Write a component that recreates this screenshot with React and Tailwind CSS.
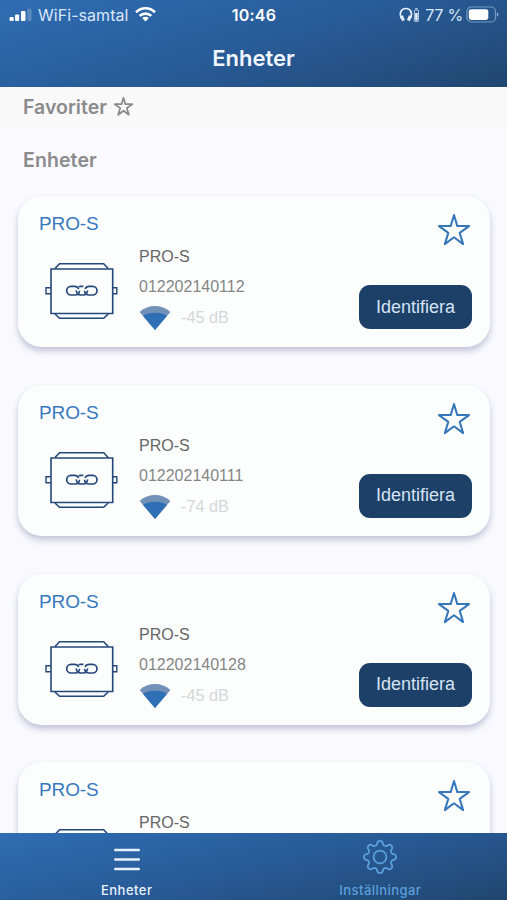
const DEVICES = [
  { id: 1, name: "PRO-S", serial: "012202140112", signal: "-45 dB" },
  { id: 2, name: "PRO-S", serial: "012202140111", signal: "-74 dB" },
  { id: 3, name: "PRO-S", serial: "012202140128", signal: "-45 dB" },
  { id: 4, name: "PRO-S" },
];

export default function App() {
  return (
    <div className="h-[900px] w-[507px] overflow-hidden flex flex-col bg-[#f9f9fe] font-['Inter',sans-serif]">
      <Header />
      <main className="flex-1 min-h-0 overflow-hidden">
        <div className="h-[39px] pl-[23px] flex items-center gap-[6px] bg-[#f9f9fa] text-[#8b8b8e]">
          <h2 className="text-[19.5px] leading-6 font-semibold">Favoriter</h2>
          <StarIcon className="size-[21px]" strokeWidth={2} />
        </div>
        <h2 className="mt-[22px] pl-[23px] text-[19.5px] leading-6 font-semibold tracking-[0.1px] text-[#8b8b8e]">Enheter</h2>
        <div className="mt-[24px] pl-[18px] pr-[17px] flex flex-col gap-[37.8px]">
          {DEVICES.map((d) => (
            <DeviceCard key={d.id} device={d} />
          ))}
        </div>
      </main>
      <TabBar />
    </div>
  );
}

function Header() {
  return (
    <header className="h-[87px] shrink-0 bg-[linear-gradient(163deg,#2f6db3_0%,#285b97_52%,#20466f_100%)] text-[#f0f6ff]">
      <div className="h-[30px] grid grid-cols-[1fr_auto_1fr] items-center pl-[9px] pr-[8px] text-[16px] leading-5">
        <div className="flex items-center">
          <SignalBars />
          <span className="ml-[6px] text-[16px] tracking-[0.05px] text-[#d8e7fa]">WiFi-samtal</span>
          <WifiIcon />
        </div>
        <span className="font-semibold tracking-[0.2px] text-white">10:46</span>
        <div className="flex items-center justify-end">
          <HeadphonesIcon />
          <span className="ml-[5px] whitespace-nowrap tracking-[-0.2px] text-[#d8e7fa]">77 %</span>
          <BatteryIcon />
        </div>
      </div>
      <h1 className="mt-[14px] text-center text-[22px] leading-7 font-semibold">Enheter</h1>
    </header>
  );
}

function DeviceCard({ device }) {
  return (
    <article className="h-[151px] shrink-0 rounded-[24px] bg-[#fcfefe] pl-[21px] pr-[18px] flex justify-between font-['Liberation_Sans',sans-serif] shadow-[0_4px_6px_rgba(90,95,145,0.34)]">
      <div>
        <h3 className="pt-[17px] text-[19px] leading-[22px] tracking-[-0.1px] text-[#3778bd]">{device.name}</h3>
        <div className="mt-[12px] flex">
          <DeviceIcon />
          <div className="ml-[21px] text-[16px] leading-5">
            <div className="text-[#666]">{device.name}</div>
            {device.serial && <div className="mt-[10px] text-[#858585]">{device.serial}</div>}
            {device.signal && (
              <div className="mt-[8px] flex items-center text-[#d6d7d9]">
                <SignalFan />
                <span className="ml-[9px] -mt-[1px] text-[16.3px]">{device.signal}</span>
              </div>
            )}
          </div>
        </div>
      </div>
      <div className="flex flex-col items-end">
        <StarIcon className="mt-[16px] size-9 text-[#3577b9]" strokeWidth={1.35} />
        {device.serial && (
          <button className="mt-[37px] h-[44px] w-[113px] rounded-[11px] bg-[#1d4069] text-[18px] text-[#d5e3f3]">
            Identifiera
          </button>
        )}
      </div>
    </article>
  );
}

function TabBar() {
  return (
    <nav className="h-[67px] shrink-0 grid grid-cols-2 bg-[linear-gradient(168deg,#2f6db3_0%,#285b97_50%,#20466f_100%)] text-[13px] leading-4 font-medium">
      <div className="flex flex-col items-center text-[#e8f1fd]">
        <svg className="mt-[14px]" width="28" height="24" viewBox="0 0 28 24" fill="none" stroke="currentColor" strokeWidth="2.4" strokeLinecap="round">
          <path d="M2.2 3h23.6M2.2 12.5h23.6M2.2 22h23.6" />
        </svg>
        <span className="mt-[11px] tracking-[0.5px]">Enheter</span>
      </div>
      <div className="flex flex-col items-center text-[#5b9fdc]">
        <GearIcon />
        <span className="mt-[8px] tracking-[0.45px]">Inställningar</span>
      </div>
    </nav>
  );
}

function StarIcon({ className, strokeWidth }) {
  return (
    <svg className={className} viewBox="0 0 24 24" fill="none" stroke="currentColor" strokeWidth={strokeWidth} strokeLinejoin="round">
      <path d="M12 2 14.2 9.4H22l-6.2 4.5 2.3 7.5-6.1-4.6-6.1 4.6 2.3-7.5L2 9.4h7.8Z" />
    </svg>
  );
}

function SignalBars() {
  return (
    <svg width="23" height="14" viewBox="0 0 23 14" fill="white">
      <rect x="0.5" y="9" width="4.2" height="4" rx="1" />
      <rect x="6" y="6.5" width="4.2" height="6.5" rx="1" />
      <rect x="12" y="3" width="4.5" height="10" rx="1" />
      <rect x="18.3" y="0.5" width="4.2" height="12.5" rx="1" opacity="0.22" />
    </svg>
  );
}

function WifiIcon() {
  return (
    <svg className="ml-[6px] -mt-[2px]" width="21" height="16" viewBox="0 0 21 16" fill="none" stroke="white" strokeWidth="2.7">
      <path d="M1.1 6.2a13.2 13.2 0 0 1 18.8 0" />
      <path d="M4.7 9.9a8.3 8.3 0 0 1 11.6 0" />
      <path d="M10.5 15.4 7.2 12.1a4.6 4.6 0 0 1 6.6 0Z" fill="white" stroke="none" />
    </svg>
  );
}

function HeadphonesIcon() {
  return (
    <svg width="21" height="16" viewBox="0 0 21 16" fill="none" stroke="#e3eefc">
      <path d="M2.8 12C-.8 5.3 3 1.5 6.9 1.5S14.6 5.3 11 12" strokeWidth="1.7" />
      <path d="m2.5 8.8 2 4.8M11.3 8.8l-2 4.8" strokeWidth="3" />
      <rect x="15.3" y="3" width="4.2" height="11.5" rx="1" strokeWidth="1" opacity="0.75" />
      <path d="M17.4 6v7.5" strokeWidth="2.6" />
      <path d="M16.3 1.7h2.2" strokeWidth="1.4" opacity="0.75" />
    </svg>
  );
}

function BatteryIcon() {
  return (
    <svg className="ml-[3px] -mt-[2px]" width="33" height="17" viewBox="0 0 33 17" fill="none">
      <rect x="0.9" y="1" width="28.6" height="15" rx="4.5" stroke="#8fb0d7" strokeOpacity="0.75" strokeWidth="1.2" />
      <rect x="2.8" y="3.2" width="19.5" height="10.8" rx="2.4" fill="white" />
      <path d="M30.8 6.5c2.2.8 2.2 3.2 0 4Z" fill="#8fb0d7" />
    </svg>
  );
}

// module housing with a three-link chain on the front
function DeviceIcon() {
  return (
    <svg className="ml-[6px] mt-[15px]" width="73" height="58" viewBox="0 0 73 58" fill="none" stroke="#25477a" strokeWidth="1.6">
      <path d="M6 7h61.7v44.5H6Z" />
      <path d="m10 6.5 4.5-4.7h44.2L63.2 6.5M10 52l4.5 4.3h44.2l4.5-4.3" />
      <path d="M5.7 25.8H1v6h4.7M67.7 25.8h4.1v6h-4.1" strokeWidth="1.4" />
      <g strokeWidth="1.7">
        <path d="M33.6 27a4.3 4.3 0 0 0-4-2.6h-3.6a4.3 4.3 0 0 0 0 8.6h4.2a4.3 4.3 0 0 0 4.3-4.3" />
        <path d="M31.3 28.4a4.3 4.3 0 0 0 4.3 4.6h2.6a4.3 4.3 0 0 0 4.3-4.6M33.6 24.8a4 4 0 0 1 1.8-.4h3" />
        <path d="M39.6 28.7a4.3 4.3 0 0 0 4.3 4.3h3.8a4.3 4.3 0 0 0 0-8.6h-3.6a4.3 4.3 0 0 0-4 2.6" />
      </g>
    </svg>
  );
}

function SignalFan() {
  return (
    <svg width="33" height="25" viewBox="0 0 33 25">
      <path d="M16 25 .6 7C9.5-.9 22.5-.9 31.4 7Z" fill="#7191b8" />
      <path d="M16 25 4.1 11C9 6.6 23 6.6 27.9 11Z" fill="#2f6fb6" />
    </svg>
  );
}

function GearIcon() {
  return (
    <svg className="mt-[7px]" width="34" height="34" viewBox="-17 -17 34 34" fill="none" stroke="currentColor" strokeWidth="1.8" strokeLinejoin="round">
      <path d={gearPath(8)} />
      <circle r="6.4" />
    </svg>
  );
}

// closed outline with rounded teeth, sampled in polar coordinates
function gearPath(teeth) {
  const points = [];
  for (let i = 0; i < 240; i++) {
    const a = (i / 240) * Math.PI * 2;
    const r = 14.1 + 2.1 * Math.tanh(1.6 * Math.cos(teeth * a));
    points.push(`${(r * Math.cos(a)).toFixed(2)} ${(r * Math.sin(a)).toFixed(2)}`);
  }
  return `M${points.join("L")}Z`;
}
